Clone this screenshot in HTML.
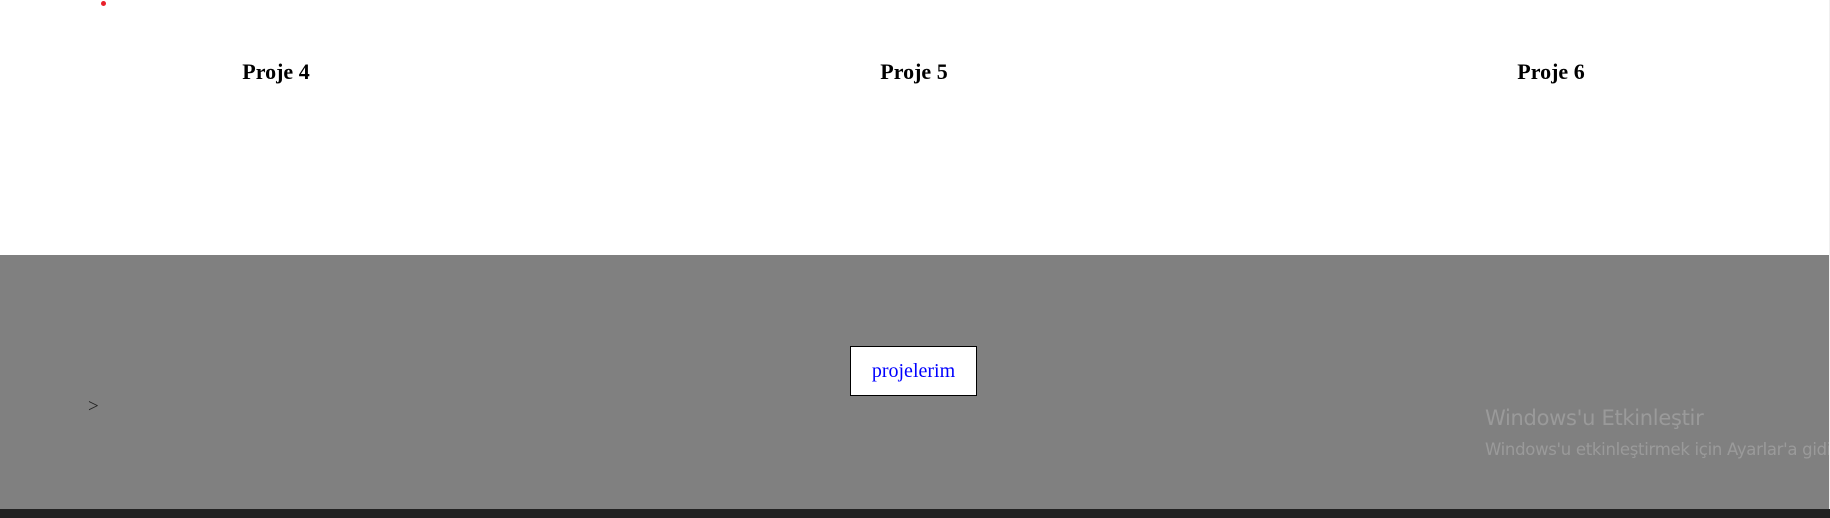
<!DOCTYPE html>
<html><head><meta charset="utf-8"><style>
html,body{margin:0;padding:0;width:1830px;height:518px;overflow:hidden;background:#fff;position:relative;font-family:"Liberation Serif",serif}
.a{position:absolute;white-space:nowrap}
h3{margin:0;position:absolute;font-size:22px;font-weight:bold;line-height:22px;transform:translateX(-50%)}
</style></head><body>
<div class="a" style="left:101px;top:1px;width:5px;height:5px;border-radius:50%;background:#e8202a"></div>
<h3 style="left:276px;top:61px">Proje 4</h3>
<h3 style="left:914px;top:61px">Proje 5</h3>
<h3 style="left:1551px;top:61px">Proje 6</h3>
<div class="a" style="left:1829px;top:0;width:1px;height:518px;background:#f0f0f0"></div>
<div class="a" style="left:0;top:255px;width:1829px;height:254px;background:#808080"></div>
<div class="a" style="left:0;top:509px;width:1830px;height:9px;background:#222"></div>
<div class="a" style="left:850px;top:346px;width:125px;height:48px;border:1px solid #000;background:#fff"></div>
<div class="a" style="left:850px;top:360px;width:127px;text-align:center;font-size:20px;line-height:22px;color:#00f">projelerim</div>
<div class="a" style="left:88px;top:396px;font-size:19px;color:#222">&gt;</div>
<div class="a" style="left:0;top:0;width:1829px;height:518px;overflow:hidden">
<div class="a" style="left:1485px;top:406px;font-family:'DejaVu Sans','Liberation Sans',sans-serif;font-size:21px;color:#9a9a9a;letter-spacing:-0.3px">Windows'u Etkinleştir</div>
<div class="a" style="left:1485px;top:440px;font-family:'DejaVu Sans','Liberation Sans',sans-serif;font-size:16.5px;color:#9a9a9a;letter-spacing:-0.3px">Windows'u etkinleştirmek için Ayarlar'a gidin</div>
</div>
</body></html>
